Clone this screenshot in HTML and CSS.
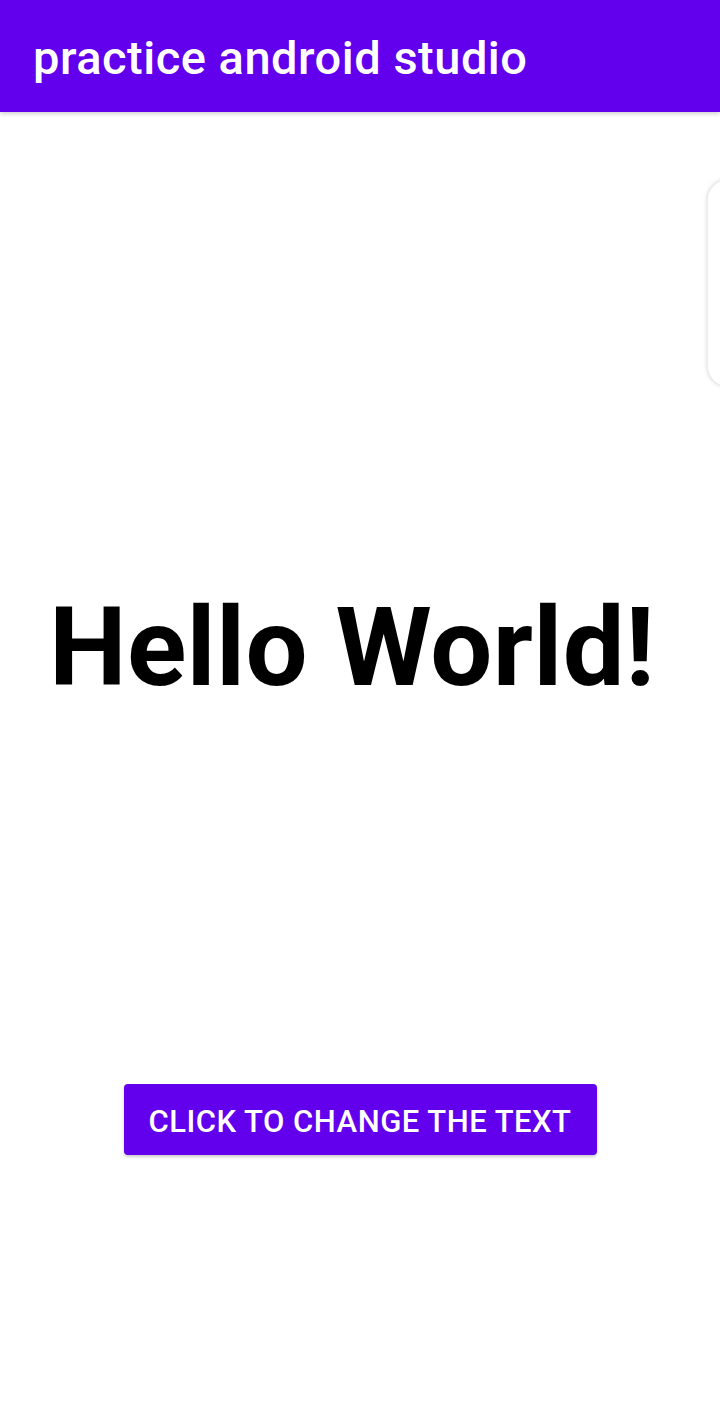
FILE: index.html
```html
<!DOCTYPE html>
<html>
<head>
<meta charset="utf-8">
<link rel="stylesheet" href="styles.css">
</head>
<body>
<div class="app">
  <header class="toolbar"><span class="title">practice android studio</span></header>
  <main class="content">
    <h1 class="hello">Hello World!</h1>
    <button class="btn">CLICK TO CHANGE THE TEXT</button>
  </main>
  <div class="edge-panel"></div>
</div>
</body>
</html>
```
FILE: styles.css
```css
html, body { margin: 0; padding: 0; background: #fff; }
body { font-family: Roboto, "Noto Sans", sans-serif; }
.app { position: relative; width: 720px; height: 1420px; overflow: hidden; }
.toolbar {
  height: 112px;
  background: #6200EE;
  display: flex;
  align-items: center;
  padding-left: 33px;
  box-sizing: border-box;
  box-shadow: 0 2px 4px rgba(0,0,0,0.18);
  position: relative;
  z-index: 1;
}
.title { color: #fff; font-weight: 500; font-size: 47px; letter-spacing: 0.5px; margin-top: 2px; }
.content { display: flex; flex-direction: column; align-items: center; }
.hello {
  margin: 471px 16px 0 0;
  font-weight: 700;
  font-size: 110px;
  line-height: 130px;
  color: #000;
  letter-spacing: 0.3px;
}
.btn {
  margin-top: 371px;
  width: 473px;
  height: 71px;
  background: #6200EE;
  color: #fff;
  border: none;
  border-radius: 4px;
  font-family: Roboto, sans-serif;
  font-weight: 500;
  font-size: 31px;
  letter-spacing: 0.5px;
  box-shadow: 0 2px 3px rgba(0,0,0,0.2);
  padding: 4px 0 0 0;
}
.edge-panel {
  position: absolute;
  left: 706px;
  top: 178px;
  width: 60px;
  height: 210px;
  border: 2px solid #ececec;
  border-radius: 22px;
  box-shadow: 0 0 4px rgba(0,0,0,0.08);
  background: #fff;
  box-sizing: border-box;
}
```
